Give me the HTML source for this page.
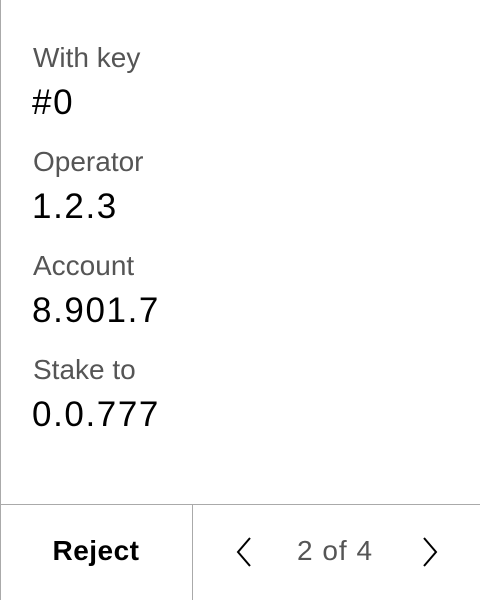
<!DOCTYPE html>
<html><head><style>
body{margin:0;width:480px;height:600px;background:#fff;font-family:"Liberation Sans",sans-serif;position:relative;overflow:hidden}
.lb{position:absolute;left:0;top:0;width:1px;height:600px;background:#aaa}
.l{position:absolute;left:33px;font-size:28px;color:#555;line-height:1}
.v{position:absolute;left:32px;font-size:35px;color:#000;line-height:1;letter-spacing:1.6px}
.hr{position:absolute;left:0;top:504px;width:480px;height:1px;background:#aaa}
.vr{position:absolute;left:192px;top:504px;width:1px;height:96px;background:#aaa}
.rej{position:absolute;left:0;width:192px;top:535px;text-align:center;font-weight:bold;font-size:28px;letter-spacing:0.5px}
.pg{position:absolute;left:275px;width:120px;top:535px;text-align:center;font-size:28px;color:#555;letter-spacing:1px}
svg{position:absolute}
</style></head><body>
<div class="lb"></div>
<div class="l" style="top:44px">With key</div>
<div class="v" style="top:85px">#0</div>
<div class="l" style="top:148px">Operator</div>
<div class="v" style="top:189px">1.2.3</div>
<div class="l" style="top:252px">Account</div>
<div class="v" style="top:293px">8.901.7</div>
<div class="l" style="top:356px">Stake to</div>
<div class="v" style="top:397px">0.0.777</div>
<div class="hr"></div><div class="vr"></div>
<div class="rej">Reject</div>
<div class="pg">2 of 4</div>
<svg style="left:234px;top:536px" width="20" height="32"><path d="M16 2 L4 16 L16 30" fill="none" stroke="#000" stroke-width="2"/></svg>
<svg style="left:420px;top:536px" width="20" height="32"><path d="M4 2 L16 16 L4 30" fill="none" stroke="#000" stroke-width="2"/></svg>
</body></html>
